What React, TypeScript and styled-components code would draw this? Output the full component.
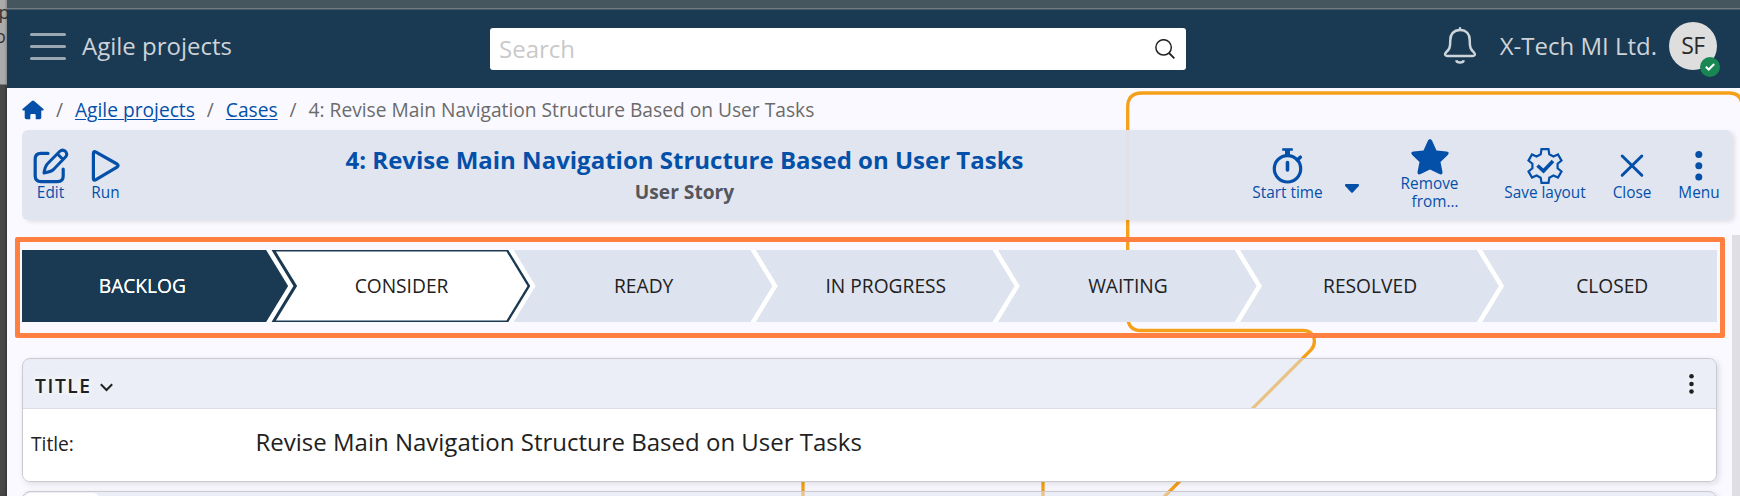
import React from 'react';
import styled, { createGlobalStyle } from 'styled-components';

const blue = '#0450a9';
const navy = '#1a3952';

const GlobalStyle = createGlobalStyle`
  *, *::before, *::after { box-sizing: border-box; }
  body {
    margin: 0;
    overflow: hidden;
    font-family: 'Open Sans', sans-serif;
    font-size: 19.2px;
    color: #212121;
    background: #faf9ff;
  }
`;

const Page = styled.div`
  display: flex;
  width: 1740px;
  height: 496px;
  overflow: hidden;
`;

const Backdrop = styled.div`
  width: 7px;
  flex: none;
  display: flex;
  flex-direction: column;
  background: #484848;
  box-shadow: inset -2px 0 2px rgba(0, 0, 0, 0.2);
`;

const BackdropCard = styled.div`
  height: 85px;
  overflow: hidden;
  background: linear-gradient(90deg, #ababab 60%, #8c8c8c);
  color: #333;
  font-size: 18px;
  line-height: 24px;
  display: flex;
  flex-direction: column;
  border-bottom: 1px solid #777;

  span { margin-left: -1.5px; }
  span + span { margin-left: -5px; }
`;

const AppWindow = styled.div`
  position: relative;
  flex: 1;
  display: flex;
  flex-direction: column;
  overflow: hidden;
  background: #faf9ff;
`;

const TopStrip = styled.div`
  height: 10px;
  flex: none;
  background: #45565f;
  border-bottom: 1px solid #475a65;
  box-shadow: inset 0 -1px #6f7b80;
`;

const Header = styled.header`
  height: 78px;
  flex: none;
  display: flex;
  align-items: flex-start;
  padding: 12px 23px 0 22px;
  background: ${navy};
  color: #cdd3d8;
  font-size: 24px;
  line-height: 48px;
`;

const Burger = styled.div`
  width: 36px;
  margin: 11px 16.5px 0 0.5px;
  display: flex;
  flex-direction: column;
  gap: 9px;

  i {
    height: 3px;
    border-radius: 2px;
    background: #9ba8b1;
  }
`;

const AppName = styled.div`
  width: 408px;
  height: 48px;
`;

const SearchBox = styled.div`
  width: 696px;
  height: 42px;
  margin-top: 6px;
  padding: 0 11px 0 9px;
  display: flex;
  align-items: center;
  justify-content: space-between;
  background: #fff;
  border-radius: 3px;
  color: #c9c9c9;
`;

const Account = styled.div`
  margin-left: auto;
  display: flex;
  align-items: flex-start;
`;

const Company = styled.span`
  margin: 0 12px 0 23px;
`;

const Avatar = styled.div`
  position: relative;
  width: 48px;
  height: 48px;
  border-radius: 50%;
  background: #dedede;
  color: #2a2a2a;
  text-align: center;
  font-size: 23px;
  line-height: 47px;
  letter-spacing: -0.5px;
`;

const Badge = styled.span`
  position: absolute;
  right: -3px;
  bottom: -7px;
  width: 20px;
  height: 20px;
  border-radius: 50%;
  background: #198754;
  display: flex;
  align-items: center;
  justify-content: center;
`;

const Wires = styled.svg`
  position: absolute;
  left: -7px;
  top: 0;
  width: 1740px;
  height: 496px;
`;

const Content = styled.main`
  position: relative;
  flex: 1;
  display: flex;
  flex-direction: column;
  padding-left: 15px;
`;

const Breadcrumb = styled.nav`
  height: 42px;
  display: flex;
  align-items: center;
  color: #6b6b6b;
  line-height: 42px;
  padding-top: 1px;

  a {
    color: ${blue};
    text-decoration: underline;
    text-underline-offset: 2px;
    text-decoration-thickness: 1px;
  }
`;

const Slash = styled.span`
  margin: 0 11.9px 0 12px;
`;

const Toolbar = styled.div`
  width: 1710px;
  height: 90px;
  flex: none;
  display: flex;
  align-items: center;
  border-radius: 6px;
  background: rgba(224, 228, 239, 0.97);
  box-shadow: 3px 2px 4px rgba(0, 0, 0, 0.1);
`;

const Tool = styled.button<{ $w: number }>`
  width: ${(p) => p.$w}px;
  flex: none;
  padding: 0;
  border: 0;
  background: none;
  display: flex;
  flex-direction: column;
  align-items: center;
  font: 15.36px/18px 'Open Sans', sans-serif;
  color: ${blue};
  white-space: nowrap;

  svg { display: block; }
`;

const SecondLine = styled.span`
  padding-left: 11px;
`;

const Heading = styled.div`
  flex: 1;
  text-align: center;
  font-weight: 700;
  padding: 0 12px 2px 0;
`;

const CaseTitle = styled.div`
  font-size: 24px;
  line-height: 34px;
  color: ${blue};
`;

const CaseType = styled.div`
  line-height: 29px;
  color: #55565c;
`;

const Caret = styled.div`
  width: 14px;
  margin: 26px 0 0 19px;
  display: flex;
`;

const Process = styled.div`
  width: 1695px;
  height: 72px;
  flex: none;
  margin-top: 30px;
  display: flex;
  background: #fff;
`;

const Step = styled.div<{ $fill: string; $first?: boolean; $last?: boolean; $outlined?: boolean }>`
  position: relative;
  width: calc(100% / 7);
  flex: none;
  display: flex;
  align-items: center;
  justify-content: center;
  padding: 0 ${(p) => (p.$first ? 1.4 : 0)}px 2px ${(p) => (p.$first ? 0 : 32.6)}px;
  color: ${(p) => (p.$first ? '#fff' : '#212121')};
  ${(p) => (p.$first ? 'text-shadow: 0 0 0.6px #fff;' : '')}

  &::before,
  &::after {
    content: '';
    position: absolute;
    inset: 0 ${(p) => (p.$last ? 0 : -24)}px 0 0;
    background: ${(p) => p.$fill};
    clip-path: polygon(
      ${(p) => (p.$first ? '0 0' : '7.4px 0')},
      ${(p) => (p.$last ? '100% 0, 100% 100%' : 'calc(100% - 22px) 0, 100% 50%, calc(100% - 22px) 100%')},
      ${(p) => (p.$first ? '0 100%' : '7.4px 100%, 29.3px 50%')}
    );
  }

  &::after {
    display: ${(p) => (p.$outlined ? 'block' : 'none')};
    background: #fff;
    clip-path: polygon(
      11.8px 1.6px,
      calc(100% - 23.8px) 1.6px,
      calc(100% - 2.8px) 50%,
      calc(100% - 23.8px) calc(100% - 1.6px),
      11.8px calc(100% - 1.6px),
      33px 50%
    );
  }

  span { position: relative; z-index: 1; }
`;

const Highlight = styled.div`
  position: absolute;
  left: 8px;
  top: 149px;
  width: 1710px;
  height: 101px;
  border: 5px solid #ff8040;
  border-radius: 2px;
`;

const Panel = styled.section`
  width: 1695px;
  flex: none;
  border: 1px solid #c9c9cf;
  border-radius: 8px;
  box-shadow: 2px 2px 6px rgba(0, 0, 0, 0.12);
  overflow: hidden;
`;

const TitlePanel = styled(Panel)`
  height: 124px;
  margin-top: 36px;
`;

const NextPanel = styled(Panel)`
  height: 60px;
  margin-top: 9px;
  padding: 1px 2px;
  background: rgba(220, 227, 240, 0.51);
`;

const Tab = styled.div`
  width: 74px;
  height: 40px;
  border-radius: 6px;
  background: #fff;
`;

const PanelHeader = styled.div`
  height: 50px;
  display: flex;
  align-items: center;
  justify-content: space-between;
  padding: 4px 22px 0 12px;
  background: rgba(220, 227, 240, 0.51);
  border-bottom: 1px solid #dcdde4;
`;

const PanelTitle = styled.div`
  display: flex;
  align-items: center;
  gap: 8.5px;
  font-weight: 600;
  letter-spacing: 1.6px;
  text-shadow: 0 0 6px #fff, 0 0 12px #fff;

  svg { margin-top: 4px; }
`;

const MoreButton = styled.div`
  display: flex;
  filter: drop-shadow(0 0 5px #fff);
  margin-top: -3px;
`;

const Field = styled.div`
  height: 72px;
  display: flex;
  align-items: baseline;
  padding: 16px 0 0 8px;
  background: #fff;
`;

const FieldLabel = styled.div`
  width: 224.5px;
`;

const FieldValue = styled.div`
  font-size: 24px;
`;

const Scrollbar = styled.div`
  position: absolute;
  right: 0;
  top: 147px;
  width: 8px;
  height: 261px;
  background: #dedee4;
`;

const steps = ['BACKLOG', 'CONSIDER', 'READY', 'IN PROGRESS', 'WAITING', 'RESOLVED', 'CLOSED'];

const line = { fill: 'none', stroke: blue, strokeLinecap: 'round', strokeLinejoin: 'round' } as const;

export default function App() {
  return (
    <Page>
      <GlobalStyle />
      <Backdrop>
        <BackdropCard>
          <span>p</span>
          <span>o</span>
        </BackdropCard>
      </Backdrop>
      <AppWindow>
        <Wires viewBox="0 0 1740 496" fill="none" stroke="#f6a01a" strokeWidth="3.3">
          <path d="M1742 112V106Q1742 93 1729 93H1142Q1127.7 93 1127.7 107V316Q1127.7 330.5 1141 330.5H1303C1315 330.5 1317 343 1311 350L1164 497" />
          <path d="M803 440V500M1043 440V500" />
        </Wires>
        <TopStrip />
        <Header>
          <Burger><i /><i /><i /></Burger>
          <AppName>Agile projects</AppName>
          <SearchBox>
            <span>Search</span>
            <svg width="20" height="20" viewBox="0 0 20 20" fill="none" stroke="#222" strokeWidth="1.5">
              <circle cx="8.6" cy="8.4" r="7.7" />
              <path d="M14 14l5.4 5.4" strokeWidth="1.8" />
            </svg>
          </SearchBox>
          <Account>
            <svg width="34" height="48" viewBox="0 0 34 48" fill="none" stroke="#cdd5da" strokeWidth="2.5" strokeLinecap="round" strokeLinejoin="round">
              <path d="M17 6.300V8M17 8C10.5 8 7.3 12.500 7.300 18C7.300 26 6.200 27.500 3.600 29.800C1 32.200 2 34 4.200 34H29.800C32 34 33 32.200 30.400 29.800C27.800 27.500 26.700 26 26.700 18C26.700 12.500 23.500 8 17 8Z" />
              <path d="M13.300 38.200C13.800 41.200 20.200 41.200 20.700 38.200" strokeLinecap="butt" />
            </svg>
            <Company>X-Tech MI Ltd.</Company>
            <Avatar>
              SF
              <Badge>
                <svg width="10" height="8" viewBox="0 0 10 8" fill="none" stroke="#fff" strokeWidth="2">
                  <path d="M.8 3.800L3.700 6.500L9.200 1" />
                </svg>
              </Badge>
            </Avatar>
          </Account>
        </Header>
        <Content>
          <Breadcrumb>
            <svg width="22" height="20" viewBox="0 0 22 20" fill={blue}>
              <path d="M9.900 .9Q11 0 12.100 .9L21.200 8.700Q22.400 10.200 20.800 10.600H19.300V17.500Q19.300 19.200 17.600 19.200H13.700V15.200Q13.700 14.100 12.600 14.100H9.400Q8.300 14.100 8.300 15.200V19.200H4.400Q2.700 19.200 2.700 17.500V10.600H1.200Q-.4 10.200 .8 8.700Z" />
            </svg>
            <Slash>/</Slash>
            <a>Agile projects</a>
            <Slash>/</Slash>
            <a>Cases</a>
            <Slash>/</Slash>
            <span>4: Revise Main Navigation Structure Based on User Tasks</span>
          </Breadcrumb>
          <Toolbar>
            <Tool $w={57}>
              <svg width="36" height="36" viewBox="0 0 36 36" {...line} strokeWidth="3.2">
                <path d="M15 5.400H8Q2.200 5.400 2.200 11V28Q2.200 33.600 8 33.600H24.500Q30.200 33.600 30.200 28V21" />
                <path d="M26.800 3.300Q29.500 .9 32.300 3.200Q35 6 32.700 8.800L20.500 21.500Q18 23.700 11 25Q12 18.500 14.500 15.800ZM24.800 6.200L29.500 11" strokeWidth="3" />
              </svg>
              Edit
            </Tool>
            <Tool $w={53}>
              <svg width="36" height="36" viewBox="0 0 36 36" {...line} strokeWidth="3.200">
                <path d="M5.400 5.500Q5.400 2.700 8 4.200L29 16Q31.200 17.600 29 19.200L8 31.700Q5.400 33.200 5.400 30.500Z" />
              </svg>
              Run
            </Tool>
            <Heading>
              <CaseTitle>4: Revise Main Navigation Structure Based on User Tasks</CaseTitle>
              <CaseType>User Story</CaseType>
            </Heading>
            <Tool $w={77}>
              <svg width="36" height="36" viewBox="0 0 36 36" {...line} strokeWidth="3.200">
                <circle cx="17.500" cy="20.800" r="13.200" />
                <path d="M13.500 1.500H21.500" strokeLinecap="square" strokeWidth="2.600" />
                <path d="M17.500 2V7" strokeWidth="5" strokeLinecap="butt" />
                <path d="M27.300 12L30.300 9.200" strokeWidth="3.600" />
                <path d="M17.500 14.500V22" strokeWidth="3.600" />
              </svg>
              Start time
            </Tool>
            <Caret>
              <svg width="14" height="9" viewBox="0 0 14 9" fill={blue}>
                <path d="M1 0H13Q15 .8 13.600 2.200L8 8.300Q7 9.300 6 8.300L.4 2.200Q-1 .8 1 0Z" />
              </svg>
            </Caret>
            <Tool $w={141}>
              <svg width="38" height="36" viewBox="0 0 38 36" fill={blue}>
                <path d="M17 1.600Q19 -1.400 21 1.600L25.500 11.500L35.500 12.500Q39.200 13.200 36.800 16L29.500 23L31.500 33Q31.600 36.500 28.300 35L19 30.500L9.700 35Q6.400 36.500 6.500 33L8.500 23L1.200 16Q-1.200 13.200 2.500 12.500L12.500 11.500Z" />
              </svg>
              <span>Remove</span>
              <SecondLine>from…</SecondLine>
            </Tool>
            <Tool $w={90}>
              <svg width="36" height="36" viewBox="0 0 36 36" {...line} strokeWidth="2.200" strokeLinejoin="miter">
                <path d="M14.500 1.200H21.500L22.300 6.200L26.400 8.500L31 6.500L34.500 12.600L30.600 15.700V20.300L34.500 23.400L31 29.500L26.400 27.500L22.300 29.800L21.500 34.800H14.500L13.700 29.800L9.600 27.500L5 29.500L1.500 23.400L5.400 20.300V15.700L1.500 12.600L5 6.500L9.600 8.500L13.700 6.200Z" />
                <path d="M10.500 17.500L16.500 23L26 13" strokeWidth="3.600" strokeLinecap="butt" />
              </svg>
              Save layout
            </Tool>
            <Tool $w={84}>
              <svg width="36" height="36" viewBox="0 0 36 36" {...line} strokeWidth="3">
                <path d="M8.200 8L27.800 27.300M27.800 8L8.200 27.300" />
              </svg>
              Close
            </Tool>
            <Tool $w={50}>
              <svg width="36" height="36" viewBox="0 0 36 36" fill={blue}>
                <circle cx="17.800" cy="6.500" r="3.500" />
                <circle cx="17.800" cy="17.700" r="3.500" />
                <circle cx="17.800" cy="29" r="3.500" />
              </svg>
              Menu
            </Tool>
            <div style={{ width: 8 }} />
          </Toolbar>
          <Process>
            {steps.map((name, i) => (
              <Step
                key={name}
                $fill={i < 2 ? navy : '#dde3ef'}
                $first={i === 0}
                $outlined={i === 1}
                $last={i === steps.length - 1}
              >
                <span>{name}</span>
              </Step>
            ))}
          </Process>
          <TitlePanel>
            <PanelHeader>
              <PanelTitle>
                TITLE
                <svg width="13" height="9" viewBox="0 0 13 9" fill="none" stroke="#212121" strokeWidth="2">
                  <path d="M.8 1.200L6.500 7L12.200 1.200" />
                </svg>
              </PanelTitle>
              <MoreButton>
                <svg width="5" height="22" viewBox="0 0 5 22" fill="#212121">
                  <circle cx="2.500" cy="3.300" r="2.300" />
                  <circle cx="2.500" cy="11" r="2.300" />
                  <circle cx="2.500" cy="18.500" r="2.300" />
                </svg>
              </MoreButton>
            </PanelHeader>
            <Field>
              <FieldLabel>Title:</FieldLabel>
              <FieldValue>Revise Main Navigation Structure Based on User Tasks</FieldValue>
            </Field>
          </TitlePanel>
          <NextPanel>
            <Tab />
          </NextPanel>
          <Scrollbar />
          <Highlight />
        </Content>
      </AppWindow>
    </Page>
  );
}
